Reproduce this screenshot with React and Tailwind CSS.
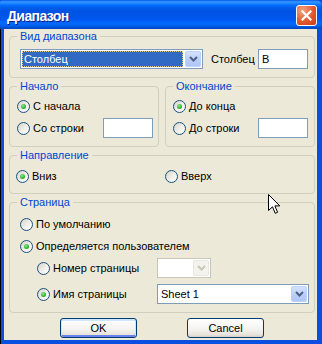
import React from "react";

function Radio({ checked }) {
  return (
    <span className="w-[13px] h-[13px] shrink-0 rounded-full border border-[#1c5180] bg-[linear-gradient(135deg,#d6d3c8_0%,#f1f0ea_55%,#ffffff_100%)] flex items-center justify-center">
      {checked && (
        <span className="w-[5px] h-[5px] rounded-full bg-[radial-gradient(circle_at_40%_35%,#8ee68e_0%,#2db42d_60%,#1b8f1b_100%)]" />
      )}
    </span>
  );
}

function Option({ checked, label, className = "" }) {
  return (
    <label className={`h-[20px] flex items-center gap-[3px] ${className}`}>
      <Radio checked={checked} />
      <span>{label}</span>
    </label>
  );
}

function Chevron({ color }) {
  return (
    <svg width="9" height="6" viewBox="0 0 9 6">
      <path d="M1 1 L4.5 4.5 L8 1" fill="none" stroke={color} strokeWidth="2" />
    </svg>
  );
}

function Combo({ width, value, selected, disabled }) {
  return (
    <div
      className={`h-[20px] flex bg-white border ${disabled ? "border-[#c9c7ba]" : "border-[#7f9db9]"} ${width}`}
    >
      {selected ? (
        <div className="m-[1px] mr-[2px] flex-1 bg-[#316ac5] border border-dotted border-[#d9c98a] text-white pl-[1px] leading-[14px]">
          {value}
        </div>
      ) : (
        <div className="m-[1px] mr-[2px] flex-1 pl-[2px] leading-[16px]">{value}</div>
      )}
      {disabled ? (
        <div className="w-[16px] m-[1px] ml-0 rounded-[2px] bg-[#f4f3ee] border border-[#e8e6dd] flex items-center justify-center">
          <Chevron color="#c9c7ba" />
        </div>
      ) : (
        <div className="w-[16px] m-[1px] ml-0 rounded-[2px] bg-[linear-gradient(180deg,#d4e2fd_0%,#bccffa_50%,#b0c6f6_100%)] border border-[#bcd0f8] flex items-center justify-center">
          <Chevron color="#4d6185" />
        </div>
      )}
    </div>
  );
}

function TextBox({ value = "", className = "" }) {
  return (
    <div className={`h-[20px] w-[50px] bg-white border border-[#7f9db9] pl-[3px] leading-[18px] ${className}`}>
      {value}
    </div>
  );
}

function Group({ title, className = "", children }) {
  return (
    <fieldset className={`border border-[#d0d0bf] rounded-[4px] min-w-0 ${className}`}>
      <legend className="ml-[7px] px-[3px] leading-[13px] text-[#0046d5]">{title}</legend>
      {children}
    </fieldset>
  );
}

function Button({ children, isDefault }) {
  return (
    <button
      className={`h-[20px] w-[77px] rounded-[3px] border border-[#003c74] bg-[linear-gradient(180deg,#ffffff_0%,#f3f2ee_60%,#e6e3da_88%,#d6d0c5_100%)] text-black leading-[18px] ${
        isDefault
          ? "shadow-[inset_0_1px_0_1px_#cee7ff,inset_0_-1px_0_1px_#6982ee]"
          : ""
      }`}
    >
      {children}
    </button>
  );
}

export default function App() {
  return (
    <div className="relative w-[322px] h-[344px] flex flex-col bg-[#0a4fe0] font-['Liberation_Sans',Arial,sans-serif] text-[11px] text-black select-none">
      {/* Title bar */}
      <div className="h-[29px] shrink-0 flex items-start pl-[7px] pr-[5px] rounded-tl-[3px] rounded-tr-[6px] bg-[linear-gradient(180deg,#0058ee_0%,#3593ff_6%,#288eff_10%,#127dff_14%,#036ffc_18%,#0262ee_24%,#0057e5_32%,#0054e3_40%,#0055eb_60%,#005bf5_70%,#026afe_80%,#0062ef_88%,#0052d6_94%,#0045c0_100%)]">
        <span className="mt-[8px] leading-[16px] text-[14px] font-bold text-white tracking-[-0.6px] [text-shadow:1px_1px_0_#0a1f8c]">
          Диапазон
        </span>
        <div className="ml-auto mt-[5px] w-[21px] h-[21px] rounded-[3px] border border-white bg-[radial-gradient(circle_at_30%_25%,#f3a585_0%,#e2582f_55%,#c53d18_100%)] flex items-center justify-center">
          <svg width="11" height="11" viewBox="0 0 11 11">
            <path d="M1.5 1.5 L9.5 9.5 M9.5 1.5 L1.5 9.5" stroke="#fff" strokeWidth="2.2" strokeLinecap="square" />
          </svg>
        </div>
      </div>

      {/* Body frame */}
      <div className="flex-1 flex border-l border-black pl-[3px] pr-[5px] pb-[4px]">
        <div className="flex-1 flex flex-col bg-[#ece9d8] pl-[5px] pr-[2px] pt-[1px]">
          <Group title="Вид диапазона">
            <div className="flex items-center pt-[6px] pb-[8px] pl-[10px] pr-[6px]">
              <Combo width="w-[183px]" value="Столбец" selected />
              <span className="ml-[8px]">Столбец</span>
              <TextBox value="B" className="ml-auto" />
            </div>
          </Group>

          <div className="flex gap-[6px] mt-[2px]">
            <Group title="Начало" className="flex-1">
              <div className="flex flex-col gap-[2px] pt-[3px] pb-[8px] pl-[7px] pr-[5px]">
                <Option checked label="С начала" />
                <div className="flex items-center">
                  <Option label="Со строки" />
                  <TextBox className="ml-auto" />
                </div>
              </div>
            </Group>
            <Group title="Окончание" className="flex-1">
              <div className="flex flex-col gap-[2px] pt-[3px] pb-[8px] pl-[7px] pr-[6px]">
                <Option checked label="До конца" />
                <div className="flex items-center">
                  <Option label="До строки" />
                  <TextBox className="ml-auto" />
                </div>
              </div>
            </Group>
          </div>

          <Group title="Направление" className="mt-[2px]">
            <div className="flex pt-[4px] pb-[7px] pl-[6px]">
              <Option checked label="Вниз" className="w-[149px]" />
              <Option label="Вверх" />
            </div>
          </Group>

          <Group title="Страница" className="mt-[2px]">
            <div className="flex flex-col pt-[5px] pb-[8px] pl-[10px] pr-[5px]">
              <Option label="По умолчанию" />
              <Option checked label="Определяется пользователем" className="mt-[2px]" />
              <div className="flex items-center mt-[2px] pl-[17px]">
                <Option label="Номер страницы" className="w-[120px]" />
                <Combo width="w-[54px]" value="" disabled />
              </div>
              <div className="flex items-center mt-[6px] pl-[17px]">
                <Option checked label="Имя страницы" className="w-[120px]" />
                <Combo width="w-[152px]" value="Sheet 1" />
              </div>
            </div>
          </Group>

          <div className="flex gap-[50px] pl-[51px] mt-[5px]">
            <Button isDefault>OK</Button>
            <Button>Cancel</Button>
          </div>
        </div>
      </div>

      {/* Mouse pointer */}
      <svg className="absolute left-[268px] top-[194px]" width="13" height="21" viewBox="0 0 13 21">
        <path
          d="M0.5 0.5 L0.5 16.5 L4.5 12.8 L7.2 19.3 L9.6 18.3 L6.9 11.9 L11.8 11.9 Z"
          fill="#fff"
          stroke="#000"
          strokeWidth="1"
          strokeLinejoin="miter"
        />
      </svg>
    </div>
  );
}
